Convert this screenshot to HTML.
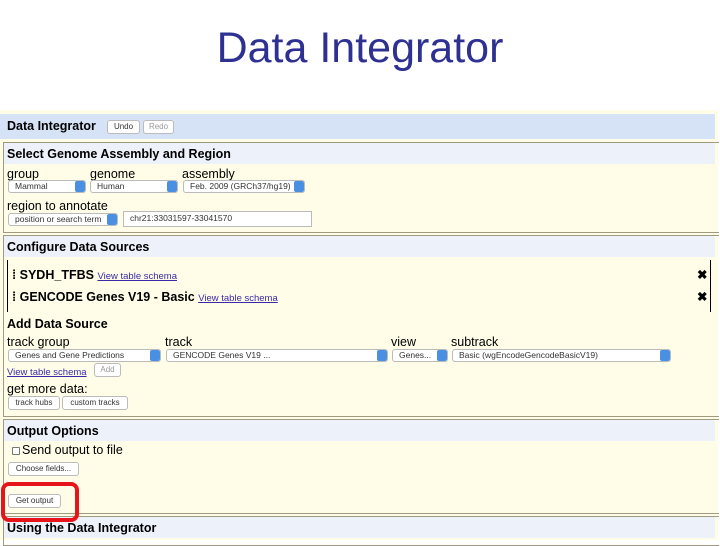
<!DOCTYPE html>
<html><head><meta charset="utf-8"><style>
*{margin:0;padding:0;box-sizing:border-box}
body{width:720px;height:540px;background:#fff;position:relative;overflow:hidden;font-family:"Liberation Sans",Arial,sans-serif;color:#000}
.a{position:absolute}
.title{left:0;width:720px;top:24px;text-align:center;font-size:43px;color:#2e3092}
.shot{left:0;top:110px;width:718px;height:430px;background:#fffde8}
.bar{background:#d6e2f6;left:0;top:114px;width:715px;height:25px}
.sec{border:1px solid #a09a80;left:3px;width:716px;border-right:none}
.hd{background:#edf1fa;left:4px;width:711px;height:21px}
.b{font-weight:bold;font-size:12.5px;white-space:nowrap}
.lbl{font-size:12.5px;white-space:nowrap}
.btn{border:1px solid #bbb;border-radius:3px;background:#fff;font-size:8px;color:#333;height:14px;line-height:12px;padding:0 2px;text-align:center;white-space:nowrap;overflow:hidden}
.sel{border:1px solid #bbb;border-radius:3px;background:#fff;font-size:8.5px;color:#333;height:13px;line-height:11px;padding-left:6px;white-space:nowrap;overflow:hidden}
.sel i{position:absolute;right:0;top:0;width:10px;height:11px;background:#4a90e2;border-radius:2px}
a{color:#3a2aa8;text-decoration:underline;font-size:9.5px}
</style></head><body>
<div class="a title">Data Integrator</div>
<div class="a shot"></div>
<div class="a bar"></div>
<div class="a b" style="left:7px;top:119px;font-size:12.5px">Data Integrator</div>
<div class="a btn" style="left:107px;top:120px;width:33px">Undo</div>
<div class="a btn" style="left:143px;top:120px;width:31px;color:#999">Redo</div>

<div class="a sec" style="top:142px;height:91px"></div>
<div class="a hd" style="top:143px"></div>
<div class="a b" style="left:7px;top:147px">Select Genome Assembly and Region</div>
<div class="a lbl" style="left:7px;top:167px">group</div>
<div class="a lbl" style="left:90px;top:167px">genome</div>
<div class="a lbl" style="left:182px;top:167px">assembly</div>
<div class="a sel" style="left:8px;top:180px;width:78px">Mammal<i></i></div>
<div class="a sel" style="left:90px;top:180px;width:88px">Human<i></i></div>
<div class="a sel" style="left:183px;top:180px;width:122px">Feb. 2009 (GRCh37/hg19)<i></i></div>
<div class="a lbl" style="left:7px;top:199px">region to annotate</div>
<div class="a sel" style="left:8px;top:213px;width:110px">position or search term<i></i></div>
<div class="a sel" style="left:123px;top:211px;width:189px;height:16px;border-radius:0;padding-top:1px">chr21:33031597-33041570</div>

<div class="a sec" style="top:235px;height:182px"></div>
<div class="a hd" style="top:236px"></div>
<div class="a b" style="left:7px;top:240px">Configure Data Sources</div>
<div class="a" style="left:7px;top:260px;width:1px;height:52px;background:#000"></div>
<div class="a" style="left:710px;top:260px;width:1px;height:52px;background:#000"></div>
<div class="a b" style="left:12px;top:268px">⁞ SYDH_TFBS <a style="font-weight:normal">View table schema</a></div>
<div class="a b" style="left:12px;top:290px">⁞ GENCODE Genes V19 - Basic <a style="font-weight:normal">View table schema</a></div>
<div class="a b" style="left:697px;top:267px">✖</div>
<div class="a b" style="left:697px;top:289px">✖</div>
<div class="a b" style="left:7px;top:317px">Add Data Source</div>
<div class="a lbl" style="left:7px;top:335px">track group</div>
<div class="a lbl" style="left:165px;top:335px">track</div>
<div class="a lbl" style="left:391px;top:335px">view</div>
<div class="a lbl" style="left:451px;top:335px">subtrack</div>
<div class="a sel" style="left:8px;top:349px;width:153px">Genes and Gene Predictions<i></i></div>
<div class="a sel" style="left:166px;top:349px;width:222px">GENCODE Genes V19 ...<i></i></div>
<div class="a sel" style="left:392px;top:349px;width:56px">Genes...<i></i></div>
<div class="a sel" style="left:452px;top:349px;width:219px">Basic (wgEncodeGencodeBasicV19)<i></i></div>
<div class="a" style="left:7px;top:362px"><a>View table schema</a></div>
<div class="a btn" style="left:94px;top:363px;width:27px;color:#999">Add</div>
<div class="a lbl" style="left:7px;top:382px">get more data:</div>
<div class="a btn" style="left:8px;top:396px;width:52px">track hubs</div>
<div class="a btn" style="left:62px;top:396px;width:66px">custom tracks</div>

<div class="a sec" style="top:419px;height:95px"></div>
<div class="a hd" style="top:420px"></div>
<div class="a b" style="left:7px;top:424px">Output Options</div>
<div class="a" style="left:12px;top:447px;width:8px;height:8px;border:1px solid #777;background:#fff;border-radius:1px"></div>
<div class="a lbl" style="left:22px;top:443px">Send output to file</div>
<div class="a btn" style="left:8px;top:462px;width:71px">Choose fields...</div>
<div class="a btn" style="left:8px;top:494px;width:53px">Get output</div>

<div class="a sec" style="top:516px;height:30px"></div>
<div class="a hd" style="top:517px"></div>
<div class="a b" style="left:7px;top:521px">Using the Data Integrator</div>
<div class="a" style="left:1px;top:482px;width:78px;height:40px;border:4px solid #e8141c;border-radius:8px;z-index:5"></div>
</body></html>
